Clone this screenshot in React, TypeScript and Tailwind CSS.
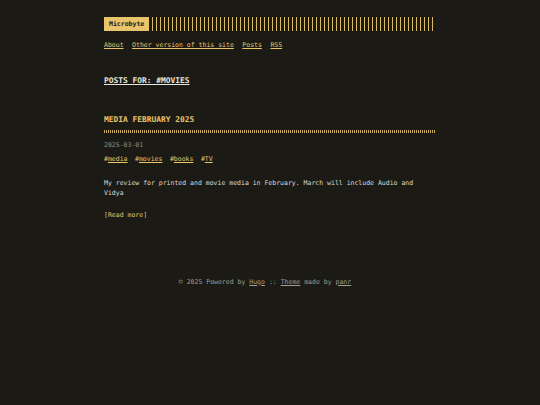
import React from "react";

export default function App() {
  return (
    <div className="min-h-[405px] w-full bg-[#1c1a14] font-['DejaVu_Sans_Mono',monospace] text-[6.5px] leading-[10px] text-[#dcdad2]">
      <div className="mx-auto w-[332px] pt-[17px]">
        {/* header */}
        <div className="flex h-[14px] items-stretch">
          <div className="flex items-center bg-[#e9c46a] px-[5px] font-bold text-[#1c1a14]">Microbyte</div>
          <div className="ml-[3px] flex-1 bg-[image:repeating-linear-gradient(90deg,#d9b866_0,#d9b866_1px,transparent_1px,transparent_4px)]" />
        </div>
        <nav className="mt-[9px] flex gap-[8.5px] text-[#e9c46a]">
          <a className="underline">About</a>
          <a className="underline">Other version of this site</a>
          <a className="underline">Posts</a>
          <a className="underline">RSS</a>
        </nav>

        <h1 className="mt-[25px] text-[7.9px] font-bold leading-[12px] text-[#e8e6de] underline">POSTS FOR: #MOVIES</h1>

        <div className="mt-[26.5px]">
          <h2 className="text-[7.9px] font-bold leading-[12px] text-[#e9c46a]">MEDIA FEBRUARY 2025</h2>
          <div className="mt-[4px] h-[3px] w-full bg-[image:repeating-linear-gradient(90deg,#c9aa5e_0,#c9aa5e_1px,transparent_1px,transparent_2px)]" />
          <div className="mt-[7px] text-[#8f8c83]">2025-03-01</div>
          <div className="mt-[4px] flex gap-[7.5px] text-[#e9c46a]">
            <span>#<a className="underline">media</a></span>
            <span>#<a className="underline">movies</a></span>
            <span>#<a className="underline">books</a></span>
            <span>#<a className="underline">TV</a></span>
          </div>
          <p className="mt-[14px] w-[330px]">
            My review for printed and movie media in February. March will include Audio and Vidya
          </p>
          <div className="mt-[12.5px] text-[#e9c46a]">[Read more]</div>
        </div>
      </div>
      <footer className="mt-[56.5px] flex justify-center pr-[10px] text-[6.5px] text-[#a09d93]">
        <span className="mr-[4px]">
          © 2025 Powered by <a className="underline">Hugo</a>
        </span>
        <span>
          :: <a className="underline">Theme</a> made by <a className="underline">panr</a>
        </span>
      </footer>
    </div>
  );
}
